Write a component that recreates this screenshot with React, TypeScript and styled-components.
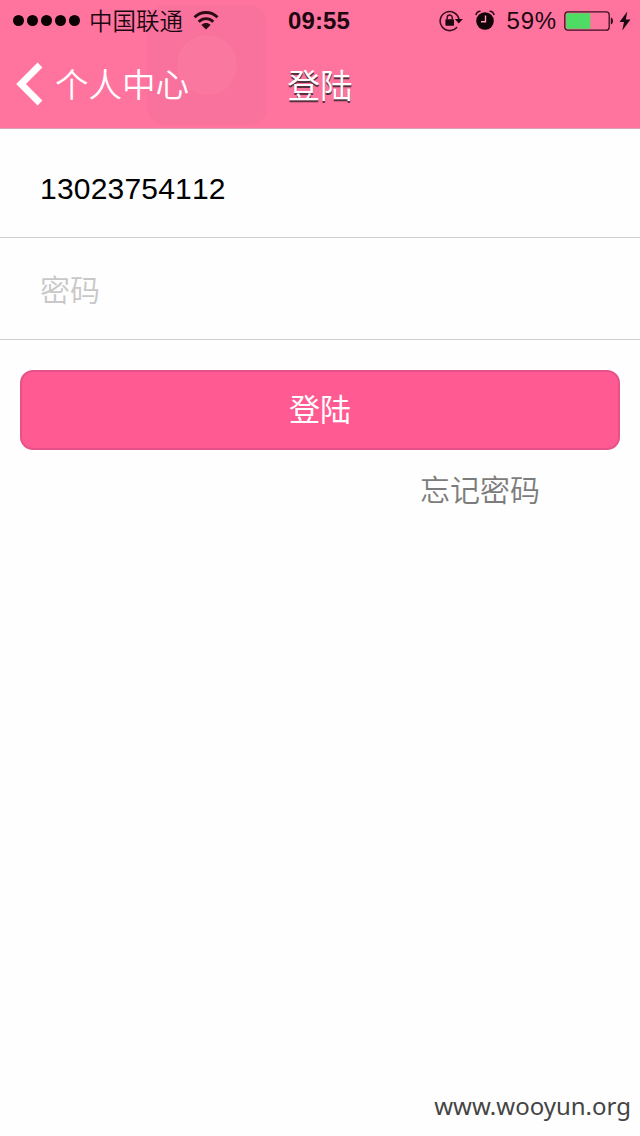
import React from 'react';
import styled, { createGlobalStyle } from 'styled-components';

const GlobalStyle = createGlobalStyle`
  * { box-sizing: border-box; }
  body {
    margin: 0;
    background: #fefefe;
    font-family: "Liberation Sans", "Noto Sans CJK SC", sans-serif;
  }
`;

const Screen = styled.div`
  width: 640px;
  height: 1136px;
  display: flex;
  flex-direction: column;
  overflow: hidden;
`;

const Header = styled.header`
  position: relative;
  height: 129px;
  flex: none;
  background: #ff739f;
  border-bottom: 1px solid #d9a3b4;
`;

const AssistiveTouch = styled.div`
  position: absolute;
  left: 147px;
  top: 5px;
  width: 120px;
  height: 120px;
  border-radius: 18px;
  background: rgba(190, 110, 140, 0.09);
  display: flex;
  align-items: center;
  justify-content: center;

  &::after {
    content: '';
    width: 60px;
    height: 60px;
    border-radius: 50%;
    background: rgba(255, 150, 180, 0.17);
  }
`;

const StatusBar = styled.div`
  position: relative;
  height: 40px;
  padding: 0 9px 0 13px;
  display: grid;
  grid-template-columns: 1fr auto 1fr;
  align-items: center;
  color: #1c0810;
`;

const StatusGroup = styled.div<{ $end?: boolean }>`
  display: flex;
  align-items: center;
  justify-content: ${(p) => (p.$end ? 'flex-end' : 'flex-start')};
  height: 40px;

  svg { display: block; flex: none; }
`;

const Signal = styled.div`
  display: flex;
  gap: 3px;
  margin-right: 9px;
`;

const SignalDot = styled.i`
  width: 11px;
  height: 11px;
  border-radius: 50%;
  background: #0c0206;
`;

const Carrier = styled.span`
  font: 350 23.5px/38px "Noto Sans CJK SC", sans-serif;
  margin-right: 10px;
  padding-bottom: 2px;
`;

const Clock = styled.time`
  font-size: 24px;
  line-height: 40px;
  font-weight: 700;
  padding-top: 1px;
  letter-spacing: 0.1px;
  margin-right: 6px;
`;

const Percent = styled.span`
  font-size: 24px;
  line-height: 40px;
  padding-top: 1px;
  letter-spacing: 0.8px;
  margin: 0 7px 0 11px;
`;

const NavBar = styled.div`
  position: relative;
  height: 88px;
  padding: 0 16px;
  display: grid;
  grid-template-columns: 1fr auto 1fr;
  align-items: center;
  color: #fff;
`;

const BackLink = styled.a`
  display: flex;
  align-items: center;
  font: 350 33.5px/86px "Noto Sans CJK SC", sans-serif;

  svg { display: block; margin-right: 11px; }
  span { padding-bottom: 2px; }
`;

const Title = styled.h1`
  margin: 0;
  font: 400 32.5px/86px "Noto Sans CJK SC", sans-serif;
  text-shadow: 0 2px 0 #56303d;
`;

const Field = styled.div<{ $height: number; $placeholder?: boolean }>`
  height: ${(p) => p.$height}px;
  flex: none;
  padding: 0 40px;
  display: flex;
  align-items: center;
  border-bottom: 1px solid #cfcfcf;
  font-size: 30px;
  font-kerning: none;
  letter-spacing: ${(p) => (p.$placeholder ? '0' : '0.2px')};
  font-weight: ${(p) => (p.$placeholder ? 350 : 400)};
  color: ${(p) => (p.$placeholder ? '#c8c8c8' : '#000')};
  padding-top: ${(p) => (p.$placeholder ? '0' : '12px')};
  padding-bottom: ${(p) => (p.$placeholder ? '2px' : '0')};
`;

const LoginButton = styled.button`
  flex: none;
  height: 80px;
  margin: 30px 20px 0;
  padding: 0 0 4px;
  border: 2px solid #e5528a;
  border-radius: 13px;
  background: #ff5a92;
  color: #fff;
  font: 400 31px/72px "Noto Sans CJK SC", sans-serif;
`;

const ForgotLink = styled.a`
  align-self: flex-end;
  margin: 16px 100px 0 0;
  font: 350 30px/44px "Noto Sans CJK SC", sans-serif;
  color: #7c7c7c;
`;

const Footer = styled.footer`
  margin-top: auto;
  padding: 0 9px 12px 0;
  text-align: right;
  font: 400 24px/36px "Noto Sans", sans-serif;
  color: #444;
`;

const WifiIcon = () => (
  <svg width="26" height="19" viewBox="0 0 26 19" fill="none" stroke="#2a0b17" strokeWidth="2.8">
    <path d="M1.5 6.3C8-.1 18-.1 24.500 6.300" />
    <path d="M5.700 10.700C10 6.600 16 6.600 20.300 10.700" />
    <path d="M13 18.500L8.400 13.900C11.200 11.500 14.800 11.500 17.600 13.900Z" fill="#2a0b17" stroke="none" />
  </svg>
);

const RotationLockIcon = () => (
  <svg width="24" height="22" viewBox="0 0 24 22" fill="none" stroke="#3b0f20" strokeWidth="1.6">
    <path d="M18 17.100A9.500 9.500 0 1 1 20 9.400" />
    <path d="M15.800 8.900H23.800L19.800 13.400Z" fill="#1c0810" stroke="none" />
    <rect x="6.400" y="9.200" width="8.600" height="6.600" rx=".7" fill="#1c0810" stroke="none" />
    <path d="M8.200 9.800V7.600A2.500 2.500 0 0 1 13.200 7.600V9.800" strokeWidth="1.5" />
  </svg>
);

const AlarmIcon = () => (
  <svg width="20" height="21" viewBox="0 0 20 21" fill="none">
    <circle cx="10" cy="11" r="8.800" fill="#120308" />
    <path d="M.9 5.200C1.200 3 2.800 1.300 5.500 1.200M19.100 5.200C18.800 3 17.200 1.300 14.500 1.200" stroke="#2a0b17" strokeWidth="1.500" />
    <path d="M10.500 5.500V11.700H6" stroke="#ff9fbd" strokeWidth="1.400" />
  </svg>
);

const BatteryIcon = () => (
  <svg width="50" height="20" viewBox="0 0 50 20">
    <rect x=".8" y=".8" width="44.400" height="18.400" rx="3" fill="none" stroke="#3b0f20" strokeWidth="1.300" />
    <rect x="2.300" y="2.300" width="24" height="15.400" rx="1" fill="#4fdc64" />
    <path d="M46.800 6.500C49.700 7 49.700 13 46.800 13.500Z" fill="#2a0b17" />
  </svg>
);

const BoltIcon = () => (
  <svg width="12" height="20" viewBox="0 0 12 20">
    <path d="M8.300 .5L.5 11H5L3.300 19.500L11.500 8.500H6.800Z" fill="#1c0810" />
  </svg>
);

const BackIcon = () => (
  <svg width="28" height="44" viewBox="0 0 28 44" fill="none" stroke="#fff" strokeWidth="6.800">
    <path d="M24 3L5 22L24 41" />
  </svg>
);

const Gap = styled.span<{ $w: number }>`
  width: ${(p) => p.$w}px;
`;

export default function App() {
  return (
    <Screen>
      <GlobalStyle />
      <Header>
        <AssistiveTouch />
        <StatusBar>
          <StatusGroup>
            <Signal>
              {[0, 1, 2, 3, 4].map((n) => (
                <SignalDot key={n} />
              ))}
            </Signal>
            <Carrier>中国联通</Carrier>
            <WifiIcon />
          </StatusGroup>
          <Clock>09:55</Clock>
          <StatusGroup $end>
            <RotationLockIcon />
            <Gap $w={12} />
            <AlarmIcon />
            <Gap $w={1} />
            <Percent>59%</Percent>
            <BatteryIcon />
            <Gap $w={5} />
            <BoltIcon />
          </StatusGroup>
        </StatusBar>
        <NavBar>
          <BackLink>
            <BackIcon />
            <span>个人中心</span>
          </BackLink>
          <Title>登陆</Title>
        </NavBar>
      </Header>
      <Field $height={109}>13023754112</Field>
      <Field $height={102} $placeholder>密码</Field>
      <LoginButton>登陆</LoginButton>
      <ForgotLink>忘记密码</ForgotLink>
      <Footer>www.wooyun.org</Footer>
    </Screen>
  );
}
